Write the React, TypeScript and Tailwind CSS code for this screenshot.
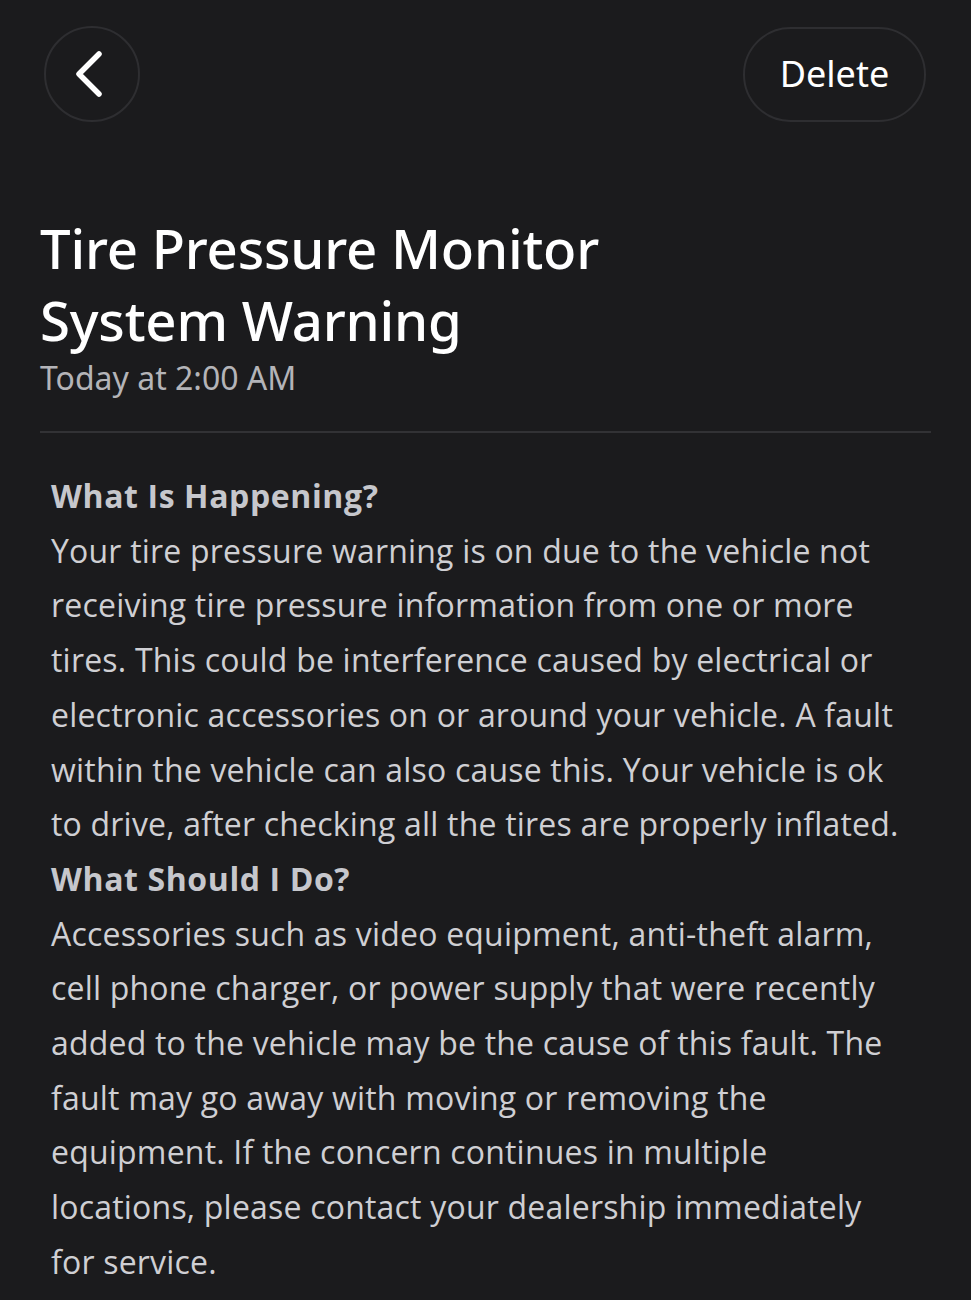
const happening = [
  'Your tire pressure warning is on due to the vehicle not',
  'receiving tire pressure information from one or more',
  'tires. This could be interference caused by electrical or',
  'electronic accessories on or around your vehicle. A fault',
  'within the vehicle can also cause this. Your vehicle is ok',
  'to drive, after checking all the tires are properly inflated.',
]

const shouldDo = [
  'Accessories such as video equipment, anti-theft alarm,',
  'cell phone charger, or power supply that were recently',
  'added to the vehicle may be the cause of this fault. The',
  'fault may go away with moving or removing the',
  'equipment. If the concern continues in multiple',
  'locations, please contact your dealership immediately',
  'for service.',
]

export default function App() {
  return (
    <div className="min-h-[1300px] w-full bg-[#1b1b1d] font-['Noto_Sans',sans-serif] text-white">
      {/* Top bar */}
      <div className="flex items-center justify-between px-[44px] pt-[26px]">
        <button className="flex h-[96px] w-[96px] items-center justify-center rounded-full border-2 border-[#2e2e31]">
          <svg width="40" height="56" viewBox="0 0 40 56" className="-ml-[6px]">
            <polyline
              points="30,8 10,28 30,48"
              fill="none"
              stroke="white"
              strokeWidth="5.5"
              strokeLinecap="round"
              strokeLinejoin="round"
            />
          </svg>
        </button>
        <button className="mr-[1px] flex h-[95px] w-[183px] items-center justify-center rounded-full border-2 border-[#2e2e31] text-[36px] text-white">
          Delete
        </button>
      </div>

      {/* Title */}
      <div className="px-[40px] pt-[90px]">
        <h1 className="text-[54.5px] font-medium leading-[72px] tracking-[-0.2px] text-white">
          Tire Pressure Monitor
          <br />
          System Warning
        </h1>
        <div className="mt-[2px] text-[32px] leading-[40px] text-[#b4b4b8]">Today at 2:00 AM</div>
        <div className="mt-[33px] h-[2px] w-[891px] bg-[#323235]" />
      </div>

      {/* Body */}
      <div className="px-[51px] pt-[36px] font-['Open_Sans',sans-serif] text-[32px] leading-[54.7px] tracking-[0.2px] text-[#cfcfd3]">
        <div className="font-bold tracking-[0.6px] text-[#c6c7cc]">What Is Happening?</div>
        {happening.map((l) => (
          <div key={l} className="whitespace-nowrap">{l}</div>
        ))}
        <div className="font-bold tracking-[0.6px] text-[#c6c7cc]">What Should I Do?</div>
        {shouldDo.map((l) => (
          <div key={l} className="whitespace-nowrap">{l}</div>
        ))}
      </div>
    </div>
  )
}
